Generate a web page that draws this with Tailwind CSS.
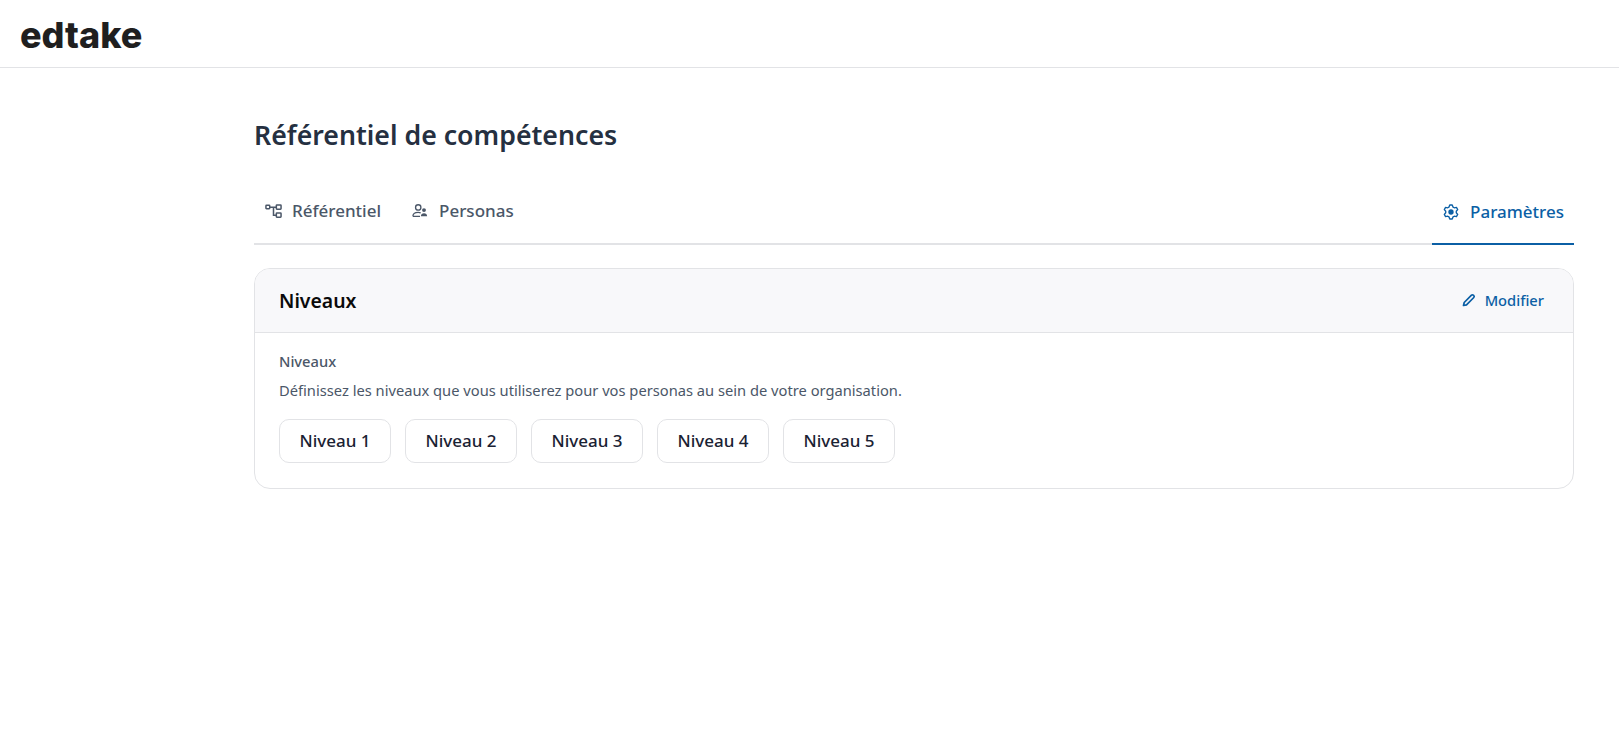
<!DOCTYPE html>
<html lang="fr">
  <head>
    <meta charset="UTF-8" />
    <title>Référentiel de compétences</title>
    <script src="https://cdn.jsdelivr.net/npm/@tailwindcss/browser@4"></script>
  </head>
  <body class="bg-white font-['Noto_Sans',sans-serif] min-h-screen">
    <header class="h-[68px] border-b border-[#e2e3e6] flex items-center pl-[20px]">
      <span class="pt-[3px] font-['Inter',sans-serif] font-extrabold text-[36px] leading-none text-[#1f1f1f]">edtake</span>
    </header>

    <main class="ml-[254px] mr-[45px]">
      <h1 class="pt-[49px] text-[26.7px] leading-[36px] font-semibold text-[#253041]">Référentiel de compétences</h1>

      <nav class="mt-[31px] h-[61px] border-b-2 border-[#e2e3e6] flex justify-between">
        <div class="flex gap-[9px]">
          <a href="#" class="flex items-center gap-[10px] px-[11px] pb-[5px] text-[17px] font-medium text-[#4b5768]">
            <svg class="w-[17px] h-[17px]" viewBox="0 0 18 18" fill="none" stroke="currentColor" stroke-width="1.6">
              <rect x="1" y="2.500" width="4" height="3.500" rx="0.600" />
              <rect x="12" y="2" width="5" height="4.500" rx="0.600" />
              <rect x="12" y="10.500" width="5" height="4.500" rx="0.600" />
              <path d="M5 4.500h7M9 4.500v8.500h3" />
            </svg>
            Référentiel
          </a>
          <a href="#" class="flex items-center gap-[11px] px-[11px] pb-[5px] text-[17px] font-medium text-[#4b5768]">
            <svg class="w-[16px] h-[16px]" viewBox="0 0 18 18" fill="none" stroke="currentColor" stroke-width="1.5">
              <circle cx="7" cy="5" r="3" />
              <path d="M1 15c0-3 2.500-4.500 6-4.500 1 0 2 .2 2.800.5M1 15h8" />
              <circle cx="13.500" cy="8" r="2.200" fill="currentColor" stroke="none" />
              <path d="M10 15c0-2.200 1.500-3.500 3.500-3.500s3.500 1.300 3.500 3.500z" fill="currentColor" stroke="none" />
            </svg>
            Personas
          </a>
        </div>
        <a href="#" class="flex items-center gap-[11px] pl-[11px] pr-[10px] pb-[3px] -mb-[2px] border-b-2 border-[#0b5fa5] text-[17px] font-medium text-[#0b5fa5]">
          <svg class="w-[16px] h-[16px]" viewBox="0 0 18 18" fill="none" stroke="currentColor" stroke-width="1.500" stroke-linejoin="round">
            <path d="M7.610 1.120L10.390 1.120 11.250 3.440 12.690 4.270 15.130 3.860 16.520 6.260 14.940 8.160 14.940 9.840 16.520 11.740 15.130 14.140 12.690 13.730 11.250 14.560 10.390 16.880 7.610 16.880 6.750 14.560 5.310 13.730 2.870 14.140 1.480 11.740 3.060 9.840 3.060 8.160 1.480 6.260 2.870 3.860 5.310 4.270 6.750 3.440z" />
            <circle cx="9" cy="9" r="3" fill="currentColor" stroke="none" />
          </svg>
          Paramètres
        </a>
      </nav>

      <section class="mt-[23px] border border-[#e2e3e6] rounded-[16px] overflow-hidden">
        <div class="h-[64px] bg-[#f8f8fa] border-b border-[#e2e3e6] flex items-center justify-between pl-[24px] pr-[29px]">
          <h2 class="text-[19.4px] font-semibold text-[#0a0a0a]">Niveaux</h2>
          <a href="#" class="flex items-center gap-[9px] text-[14.7px] font-medium text-[#0b5fa5]">
            <svg class="w-[14px] h-[14px]" viewBox="0 0 14 14" fill="none" stroke="currentColor" stroke-width="1.700" stroke-linejoin="round">
              <path d="M1.500 12.500l.7-3L9.500 2.200a1.300 1.300 0 0 1 1.800 0l.5.5a1.300 1.300 0 0 1 0 1.800L4.500 11.800z" />
            </svg>
            Modifier
          </a>
        </div>
        <div class="px-[24px] pt-[18px] pb-[25px]">
          <p class="text-[14.7px] leading-[20px] font-medium text-[#4b5768]">Niveaux</p>
          <p class="mt-[9px] text-[14.7px] leading-[20px] text-[#4b5768]">Définissez les niveaux que vous utiliserez pour vos personas au sein de votre organisation.</p>
          <ul class="mt-[19px] flex gap-[14px]">
            <li class="w-[112px] h-[44px] flex items-center justify-center border border-[#e2e3e6] rounded-[10px] text-[17px] font-medium text-[#1a2233]">Niveau 1</li>
            <li class="w-[112px] h-[44px] flex items-center justify-center border border-[#e2e3e6] rounded-[10px] text-[17px] font-medium text-[#1a2233]">Niveau 2</li>
            <li class="w-[112px] h-[44px] flex items-center justify-center border border-[#e2e3e6] rounded-[10px] text-[17px] font-medium text-[#1a2233]">Niveau 3</li>
            <li class="w-[112px] h-[44px] flex items-center justify-center border border-[#e2e3e6] rounded-[10px] text-[17px] font-medium text-[#1a2233]">Niveau 4</li>
            <li class="w-[112px] h-[44px] flex items-center justify-center border border-[#e2e3e6] rounded-[10px] text-[17px] font-medium text-[#1a2233]">Niveau 5</li>
          </ul>
        </div>
      </section>
    </main>
  </body>
</html>
